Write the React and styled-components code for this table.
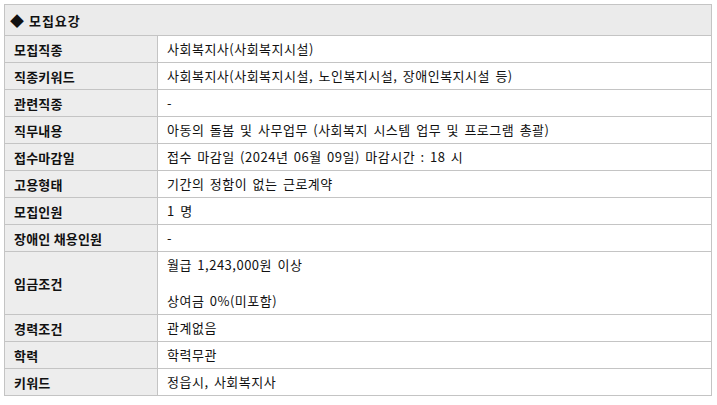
import React from "react";
import styled, { createGlobalStyle } from "styled-components";

const GlobalStyle = createGlobalStyle`
  body {
    margin: 0;
    background: #fff;
    font-family: "Noto Sans CJK KR", "Noto Sans", sans-serif;
  }
`;

const rows = [
  { label: "모집직종", value: ["사회복지사(사회복지시설)"] },
  { label: "직종키워드", value: ["사회복지사(사회복지시설, 노인복지시설, 장애인복지시설 등)"] },
  { label: "관련직종", value: ["-"] },
  { label: "직무내용", value: ["아동의 돌봄 및 사무업무 (사회복지 시스템 업무 및 프로그램 총괄)"] },
  { label: "접수마감일", value: ["접수 마감일 (2024년 06월 09일) 마감시간 : 18 시"] },
  { label: "고용형태", value: ["기간의 정함이 없는 근로계약"] },
  { label: "모집인원", value: ["1 명"] },
  { label: "장애인 채용인원", value: ["-"] },
  { label: "임금조건", value: ["월급 1,243,000원 이상", "", "상여금 0%(미포함)"] },
  { label: "경력조건", value: ["관계없음"] },
  { label: "학력", value: ["학력무관"] },
  { label: "키워드", value: ["정읍시, 사회복지사"] },
];

function App() {
  return (
    <>
      <GlobalStyle />
      <Wrap>
        <Table>
          <colgroup>
            <col style={{ width: "153px" }} />
            <col />
          </colgroup>
          <thead>
            <tr>
              <Caption colSpan={2}>
                <Diamond>◆</Diamond> 모집요강
              </Caption>
            </tr>
          </thead>
          <tbody>
            {rows.map((row) => (
              <tr key={row.label}>
                <Th>{row.label}</Th>
                <Td>
                  {row.value.map((line, i) => (
                    <Line key={i}>{line || "\u00a0"}</Line>
                  ))}
                </Td>
              </tr>
            ))}
          </tbody>
        </Table>
      </Wrap>
    </>
  );
}

const Wrap = styled.div`
  padding: 4px 5px 0 4px;
`;
const Table = styled.table`
  width: 708px;
  border-collapse: collapse;
  table-layout: fixed;
  border: 1px solid #c4c4c4;
  font-size: 13px;
  color: #111;
`;
const Caption = styled.th`
  height: 30px;
  padding: 0 0 0 5px;
  text-align: left;
  font-weight: 700;
  letter-spacing: 1px;
  word-spacing: 1px;
  background: #ebebeb;
  border: 1px solid #c4c4c4;
`;
const Diamond = styled.span`
  font-size: 14px;
  letter-spacing: 0;
`;
const Th = styled.th`
  height: 26px;
  padding: 0 0 0 9px;
  text-align: left;
  font-weight: 700;
  letter-spacing: 0.2px;
  background: #ededed;
  border: 1px solid #c4c4c4;
  white-space: nowrap;
`;
const Td = styled.td`
  padding: 4px 0 4px 9px;
  background: #fff;
  border: 1px solid #c4c4c4;
  letter-spacing: 0.5px;
  word-spacing: 2px;
`;
const Line = styled.div`
  line-height: 18px;
`;

export default App;
